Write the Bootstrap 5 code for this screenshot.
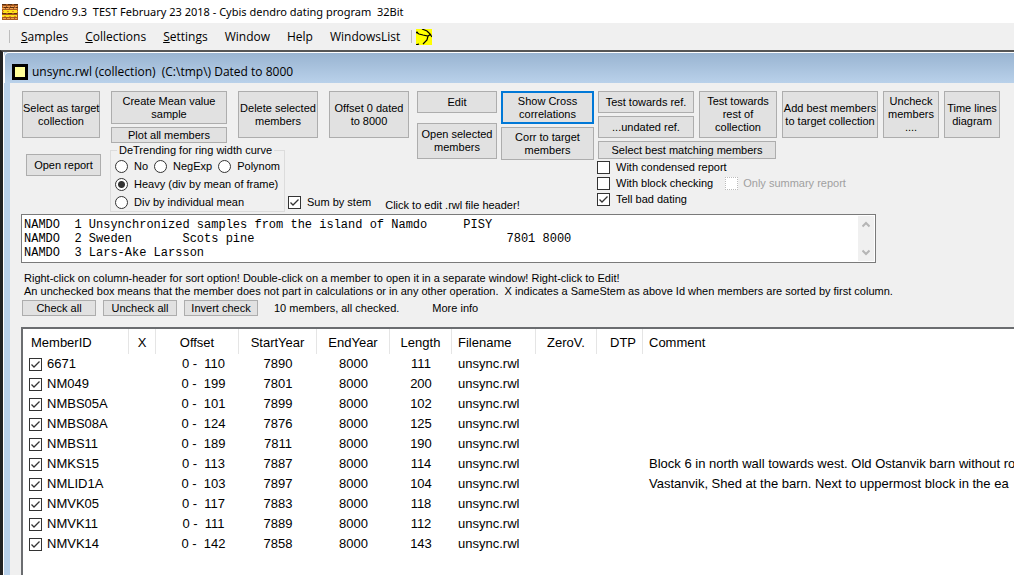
<!DOCTYPE html>
<html lang="en">
<head>
<meta charset="utf-8">
<meta name="viewport" content="width=device-width, initial-scale=1">
<title>CDendro 9.3</title>
<link href="https://cdn.jsdelivr.net/npm/bootstrap@5.3.0/dist/css/bootstrap.min.css" rel="stylesheet">
<style>
body{font:11px/13px "Liberation Sans",Arial,sans-serif;color:#000;background:#fff;height:100vh;overflow:hidden}
.seg{font-family:"Open Sans","Noto Sans",sans-serif;font-size:12px;line-height:16px;white-space:pre}
.titlebar{height:23px;padding:0 2px;gap:5px;font-family:"Noto Sans","Open Sans",sans-serif;font-size:11px}
.menubar{height:27px;background:#f0f0f0;padding:0 9px}
.menubar a{color:#000;text-decoration:none;margin-right:17px}
.menubar a:first-of-type{margin-left:11px}
.menubar a:last-of-type{margin-right:11px}
.grip{width:1px;height:13px;background:#bdbdbd}
.mdi{border-left:3px solid #222;border-top:2px solid #555;min-height:0}
.child{border-left:6px solid #b9d1ea;margin-left:1px;min-height:0}
.caption{height:31px;margin-left:-6px;padding:7px 0 0 7px;background:linear-gradient(#99b4d1,#b9d1ea);border-top:1px solid #fff;border-left:1px solid #fff;border-top-left-radius:5px}
.client{background:#f0f0f0;padding:8px 0 0 12px;min-height:0}
.client .wbtn{flex:none;font:11px/13px "Liberation Sans",Arial,sans-serif;background:#e1e1e1;border:1px solid #adadad;border-radius:0;padding:0;color:#000;white-space:nowrap}
.client .focused{border:2px solid #0078d7}
.client .thin{line-height:14px}
.tools{display:grid;grid-template-columns:395px 181px auto;grid-template-rows:52px auto;justify-content:start}
.area-left{grid-area:1/1;gap:11px}
.area-mid{grid-area:1/2/3/3;justify-self:start}
.area-right{grid-area:1/3/3/4}
.area-low{grid-area:2/1/3/3;justify-self:start}
.gap3{gap:3px}.gap5{gap:5px}.gap6{gap:6px}.gap10{gap:10px}
.w56{width:56px}.w74{width:74px}.w75{width:75px}.w78{width:78px}.w80{width:80px}.w93{width:93px}.w96{width:96px}.w116{width:116px}.w178{width:178px}
.h47{height:47px}.h33{height:33px}.h36{height:36px}.h22{height:22px}.h18{height:18px}.h16{height:16px}
.best{margin-top:3px}
.report{margin:11px 9px 0 4px}
.detrend{flex:none;width:175px;height:69px;border:1px solid #dcdcdc;padding:0 0 0 4px}
.detrend legend{float:none;width:auto;font-size:11px;line-height:14px;margin:0 0 0 2px;padding:0 2px}
.detrend label{height:18px}
.stem{margin:0 14px 3px 3px}
.tick{appearance:none;flex:none;width:13px;height:13px;margin:0;border:1px solid #333;background:#fff}
.tick:checked{background:#fff url("data:image/svg+xml,%3Csvg xmlns='http://www.w3.org/2000/svg' viewBox='0 0 11 11'%3E%3Cpath d='M1.5 5.5l2.500 2.500 5.500-5.500' fill='none' stroke='%23333' stroke-width='1.300'/%3E%3C/svg%3E")}
.tick[type=radio]{border-radius:50%}
.tick[type=radio]:checked{background:radial-gradient(circle,#333 0 3px,#fff 4px)}
.tick:disabled{border:1px dotted #bbb}
.client label{display:flex;align-items:center;gap:6px;white-space:nowrap}
.options{margin:0 0 0 -1px}
.options label{height:16px}
.client .dim{color:#a0a0a0;margin-left:12px;gap:5px}
.filehead{flex:none;width:855px;max-width:100%;height:49px;margin:2px 0 0 -1px;border:1px solid #7a7a7a;background:#fff}
.filehead textarea{border:0;resize:none;outline:0;overflow:hidden;padding:3px 2px;font:12px/14px "Liberation Mono",monospace;color:#000;white-space:pre}
.sbar{width:16px;margin:1px;background:#f0f0f0;padding:5px 4px}
.notes{margin:9px 0 2px 2px;white-space:pre}
.checks{gap:7px}
.checks span{margin-left:9px}
.checks a{margin-left:26px;color:#000;text-decoration:none}
.listbox{margin:11px 0 0 -1px;border:solid #6b6d70;border-width:2px 0 0 2px;background:#fff;overflow:hidden;min-height:0}
.members{table-layout:fixed;width:100%;font-size:13px;line-height:16px;border-collapse:separate;border-spacing:0}
.members th{font-weight:400;height:25px;padding:2px 0 0;border-right:1px solid #e5e5e5;text-align:center}
.members th:last-child{border:0}
.members td{height:20px;padding:0;text-align:center;white-space:pre}
.members .lft{text-align:left;padding-left:6px}
.members th:first-child{padding-left:8px}
.members .rgt{text-align:right;padding-right:6px}
.members label{gap:5px}
.members td:nth-child(3){padding-left:12px}
</style>
</head>
<body class="d-flex flex-column">
<header class="titlebar seg d-flex align-items-center">
<svg width="16" height="16" viewBox="0 0 16 16"><path fill="#a85a20" d="M0 0h16v16H0z"/><path fill="#ffe21a" d="M1 6h14v3H1zM0 11h15v2H0z"/><path stroke="#f0a050" stroke-dasharray="3 1" d="M1 2.500h14M0 4.500h15M1 14.500h14"/><path stroke="#5a3010" stroke-dasharray="4 2" d="M0 .5h16M2 3.500h14M0 9.500h15"/><path stroke="#e09020" stroke-dasharray="2 3" d="M0 7.500h16M2 12.500h14"/></svg>
<span>CDendro 9.3  TEST February 23 2018 - Cybis dendro dating program  32Bit</span>
</header>
<nav class="menubar seg d-flex align-items-center">
<span class="grip"></span><a href="#"><u>S</u>amples</a><a href="#"><u>C</u>ollections</a><a href="#"><u>S</u>ettings</a><a href="#">Window</a><a href="#">Help</a><a href="#">WindowsList</a><span class="grip me-1"></span>
<svg width="16" height="16" viewBox="0 0 16 16"><path fill="#ff0" d="M0 0h16v16H0z"/><path fill="none" stroke="#000" stroke-width="1.200" d="M0 3l3 2 4 1 5 1 3-2M6 0l5 2 2 2 3 4M0 4l2-1M12 7l-1 4-4 4M3 15l-3 1"/></svg>
</nav>
<main class="mdi d-flex flex-column flex-grow-1">
<section class="child d-flex flex-column flex-grow-1">
<div class="caption seg d-flex align-items-center gap-1">
<svg width="16" height="16" viewBox="0 0 16 16"><path d="M0 0h16v16H0z"/><path fill="#ff9" d="M3 3h10v10H3z"/></svg>
<span>unsync.rwl (collection)  (C:\tmp\) Dated to 8000</span>
</div>
<div class="client d-flex flex-column flex-grow-1">
<div class="tools">
<div class="area-left d-flex align-items-start">
<button class="btn wbtn w78 h47">Select as target<br>collection</button>
<div class="d-flex flex-column gap3"><button class="btn wbtn w116 h33">Create Mean value<br>sample</button><button class="btn wbtn thin w116 h16">Plot all members</button></div>
<button class="btn wbtn w80 h47">Delete selected<br>members</button>
<button class="btn wbtn w80 h47">Offset 0 dated<br>to 8000</button>
</div>
<div class="area-mid d-flex align-items-start gap-1">
<div class="d-flex flex-column gap10"><button class="btn wbtn w80 h22">Edit</button><button class="btn wbtn w80 h36">Open selected<br>members</button></div>
<div class="d-flex flex-column gap3"><button class="btn wbtn focused w93 h33">Show Cross<br>correlations</button><button class="btn wbtn w93 h33">Corr to target<br>members</button></div>
</div>
<div class="area-right">
<div class="d-flex gap5">
<div class="d-flex flex-column justify-content-between"><button class="btn wbtn w96 h22">Test towards ref.</button><button class="btn wbtn w96 h22">...undated ref.</button></div>
<button class="btn wbtn w78 h47">Test towards<br>rest of<br>collection</button>
<button class="btn wbtn w96 h47">Add best members<br>to target collection</button>
<button class="btn wbtn w56 h47">Uncheck<br>members<br>....</button>
<button class="btn wbtn w56 h47">Time lines<br>diagram</button>
</div>
<button class="btn wbtn best w178 h18 d-block">Select best matching members</button>
<div class="options">
<label><input class="tick" type="checkbox">With condensed report</label>
<div class="d-flex"><label><input class="tick" type="checkbox">With block checking</label><label class="dim"><input class="tick" type="checkbox" disabled>Only summary report</label></div>
<label><input class="tick" type="checkbox" checked>Tell bad dating</label>
</div>
</div>
<div class="area-low d-flex align-items-start">
<button class="btn wbtn report w75 h22">Open report</button>
<fieldset class="detrend"><legend>DeTrending for ring width curve</legend>
<div class="d-flex gap6"><label><input class="tick" type="radio" name="dt">No</label><label><input class="tick" type="radio" name="dt">NegExp</label><label><input class="tick" type="radio" name="dt">Polynom</label></div>
<label><input class="tick" type="radio" name="dt" checked>Heavy (div by mean of frame)</label>
<label><input class="tick" type="radio" name="dt">Div by individual mean</label>
</fieldset>
<label class="stem align-self-end"><input class="tick" type="checkbox" checked>Sum by stem</label>
<span class="align-self-end text-nowrap">Click to edit .rwl file header!</span>
</div>
</div>
<div class="filehead d-flex"><textarea class="flex-grow-1" aria-label="File header" spellcheck="false">NAMDO  1 Unsynchronized samples from the island of Namdo     PISY
NAMDO  2 Sweden       Scots pine                                   7801 8000
NAMDO  3 Lars-Ake Larsson</textarea>
<div class="sbar d-flex flex-column justify-content-between"><svg width="8" height="7" viewBox="0 0 8 7"><path fill="none" stroke="#b5b5b5" stroke-width="2" d="M.5 5.500L4 2l3.500 3.500"/></svg><svg width="8" height="7" viewBox="0 0 8 7"><path fill="none" stroke="#b5b5b5" stroke-width="2" d="M.5 1.500L4 5l3.500-3.500"/></svg></div></div>
<div class="notes">Right-click on column-header for sort option! Double-click on a member to open it in a separate window! Right-click to Edit!
An unchecked box means that the member does not part in calculations or in any other operation.  X indicates a SameStem as above Id when members are sorted by first column.</div>
<div class="checks d-flex align-items-center"><button class="btn wbtn thin w74 h16">Check all</button><button class="btn wbtn thin w74 h16">Uncheck all</button><button class="btn wbtn thin w74 h16">Invert check</button><span>10 members, all checked.</span><a href="#">More info</a></div>
<div class="listbox flex-grow-1"><table class="members">
<colgroup><col style="width:106px"><col style="width:27px"><col style="width:83px"><col style="width:78px"><col style="width:73px"><col style="width:62px"><col style="width:84px"><col style="width:61px"><col style="width:46px"><col></colgroup>
<thead><tr><th class="lft">MemberID</th><th>X</th><th>Offset</th><th>StartYear</th><th>EndYear</th><th>Length</th><th class="lft">Filename</th><th>ZeroV.</th><th class="rgt">DTP</th><th class="lft">Comment</th></tr></thead>
<tbody id="rows"></tbody>
</table></div>
</div>
</section>
</main>
<script src="https://cdn.jsdelivr.net/npm/bootstrap@5.3.0/dist/js/bootstrap.bundle.min.js"></script>
<script>
const members = [
  ['6671', 110, 7890, 111], ['NM049', 199, 7801, 200], ['NMBS05A', 101, 7899, 102],
  ['NMBS08A', 124, 7876, 125], ['NMBS11', 189, 7811, 190],
  ['NMKS15', 113, 7887, 114, 'Block 6 in north wall towards west. Old Ostanvik barn without ro'],
  ['NMLID1A', 103, 7897, 104, 'Vastanvik, Shed at the barn. Next to uppermost block in the ea'],
  ['NMVK05', 117, 7883, 118], ['NMVK11', 111, 7889, 112], ['NMVK14', 142, 7858, 143]
];
document.getElementById('rows').innerHTML = members.map(([id, off, start, len, note = '']) =>
  `<tr><td class="lft"><label><input class="tick" type="checkbox" checked>${id}</label></td><td></td><td>0 -  ${off}</td><td>${start}</td><td>8000</td><td>${len}</td><td class="lft">unsync.rwl</td><td></td><td></td><td class="lft">${note}</td></tr>`).join('');
</script>
</body>
</html>
